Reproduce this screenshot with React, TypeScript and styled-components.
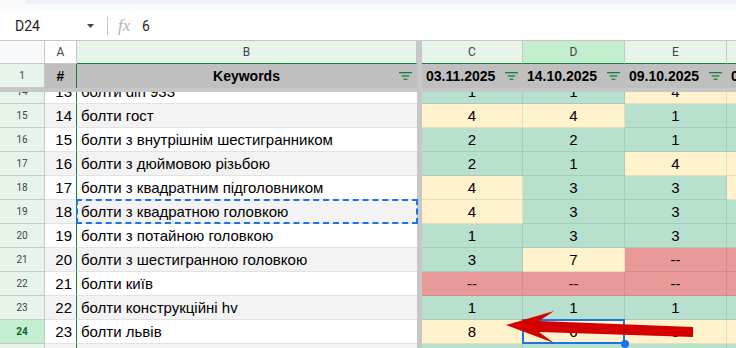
import React from 'react';
import styled, { createGlobalStyle, css } from 'styled-components';

const GlobalStyle = createGlobalStyle`
  html, body {
    margin: 0;
    padding: 0;
    background: #fff;
  }
  body {
    font-family: 'Liberation Sans', Arial, sans-serif;
  }
  * {
    box-sizing: border-box;
  }
`;

const COLS = '45px 32px 340px 5px 101px 102px 102px 102px';

type Tone = 'g' | 'y' | 'r';

const FILL: Record<Tone, string> = {
  g: '#b7e1cd',
  y: '#fff2cc',
  r: '#ea9999',
};

interface Row {
  n: number;
  a: string;
  b: string;
  cells: [string, Tone][];
}

const rows: Row[] = [
  { n: 14, a: '13', b: 'болти din 933', cells: [['1', 'g'], ['1', 'g'], ['4', 'y'], ['', 'y']] },
  { n: 15, a: '14', b: 'болти гост', cells: [['4', 'y'], ['4', 'y'], ['1', 'g'], ['', 'g']] },
  { n: 16, a: '15', b: 'болти з внутрішнім шестигранником', cells: [['2', 'g'], ['2', 'g'], ['1', 'g'], ['', 'g']] },
  { n: 17, a: '16', b: 'болти з дюймовою різьбою', cells: [['2', 'g'], ['1', 'g'], ['4', 'y'], ['', 'y']] },
  { n: 18, a: '17', b: 'болти з квадратним підголовником', cells: [['4', 'y'], ['3', 'g'], ['3', 'g'], ['', 'y']] },
  { n: 19, a: '18', b: 'болти з квадратною головкою', cells: [['4', 'y'], ['3', 'g'], ['3', 'g'], ['', 'g']] },
  { n: 20, a: '19', b: 'болти з потайною головкою', cells: [['1', 'g'], ['3', 'g'], ['3', 'g'], ['', 'g']] },
  { n: 21, a: '20', b: 'болти з шестигранною головкою', cells: [['3', 'g'], ['7', 'y'], ['--', 'r'], ['', 'r']] },
  { n: 22, a: '21', b: 'болти київ', cells: [['--', 'r'], ['--', 'r'], ['--', 'r'], ['', 'r']] },
  { n: 23, a: '22', b: 'болти конструкційні hv', cells: [['1', 'g'], ['1', 'g'], ['1', 'g'], ['', 'g']] },
  { n: 24, a: '23', b: 'болти львів', cells: [['8', 'y'], ['6', 'y'], ['5', 'y'], ['', 'y']] },
  { n: 25, a: '24', b: '', cells: [['', 'g'], ['', 'g'], ['', 'g'], ['', 'g']] },
];

const Page = styled.div`
  position: relative;
  width: 736px;
  height: 348px;
  overflow: hidden;
  background: #fff;
  display: flex;
  flex-direction: column;
`;

const TopStrip = styled.div`
  height: 12px;
  flex-shrink: 0;
  background: #f9fbfd;
  padding-left: 25px;
`;

const StripTab = styled.div`
  height: 4px;
  background: #edf2fa;
  border-bottom-left-radius: 10px;
`;

const FormulaBar = styled.div`
  height: 28px;
  flex-shrink: 0;
  display: flex;
  align-items: center;
  font-family: Roboto, 'Liberation Sans', sans-serif;
  font-size: 14px;
  color: #1f1f1f;
`;

const NameBox = styled.div`
  width: 87px;
  padding-left: 15px;
`;

const Divider = styled.div`
  width: 1px;
  height: 18px;
  background: #c7c7c7;
  margin: 0 10px 0 13px;
`;

const Fx = styled.span`
  font-family: 'Liberation Serif', serif;
  font-style: italic;
  font-size: 17px;
  color: #b4b4b4;
  width: 24px;
`;

const GridRow = styled.div<{ $h?: number }>`
  display: grid;
  grid-template-columns: ${COLS};
  height: ${(p) => p.$h ?? 24}px;
  flex-shrink: 0;
`;

type LetterTone = 'corner' | 'plain' | 'light' | 'active';

const letterBg: Record<LetterTone, string> = {
  corner: '#f8f9fa',
  plain: '#ffffff',
  light: '#e6f4ea',
  active: '#c4eed0',
};

const ColLetter = styled.div<{ $tone: LetterTone; $green?: boolean }>`
  display: flex;
  align-items: center;
  justify-content: center;
  font-family: Roboto, 'Liberation Sans', sans-serif;
  font-size: 12px;
  color: #444;
  background: ${(p) => letterBg[p.$tone]};
  border-top: 1px solid #c7c7c7;
  border-right: 1px solid #c7c7c7;
  border-bottom: 1px solid ${(p) => (p.$green ? '#188038' : '#c7c7c7')};
`;

const FreezeCol = styled.div`
  background: #c7c7c7;
`;

const FreezeRow = styled.div`
  height: 4px;
  flex-shrink: 0;
  background: #c7c7c7;
`;

const RowNum = styled.div<{ $active?: boolean }>`
  display: flex;
  align-items: center;
  justify-content: center;
  font-family: Roboto, 'Liberation Sans', sans-serif;
  font-size: 10px;
  color: ${(p) => (p.$active ? '#0d652d' : '#444')};
  font-weight: ${(p) => (p.$active ? 700 : 400)};
  background: ${(p) => (p.$active ? '#c4eed0' : '#e6f4ea')};
  border-right: 1px solid #c7c7c7;
  border-bottom: 1px solid #c7c7c7;
`;

const HeadCell = styled.div<{ $center?: boolean; $green?: boolean }>`
  display: flex;
  align-items: center;
  justify-content: ${(p) => (p.$center ? 'center' : 'space-between')};
  padding: 0 4px;
  background: #bfbfbf;
  font-size: 14px;
  font-weight: 700;
  color: #000;
  white-space: nowrap;
  overflow: hidden;
  border-right: 1px solid ${(p) => (p.$green ? '#188038' : '#bfbfbf')};
`;

const KeywordHead = styled(HeadCell)`
  position: relative;
  justify-content: center;
`;

const FilterSlot = styled.span`
  position: absolute;
  right: 4px;
  top: 8px;
  display: flex;
`;

const Body = styled.div`
  flex: 1;
  overflow: hidden;
`;

const BodyInner = styled.div`
  margin-top: -12px;
  display: flex;
  flex-direction: column;
`;

const bandCss = css<{ $band?: boolean }>`
  background: ${(p) => (p.$band ? '#f3f3f3' : '#ffffff')};
  border-bottom: 1px solid #e2e2e2;
`;

const NumCell = styled.div<{ $band?: boolean }>`
  ${bandCss};
  display: flex;
  align-items: center;
  justify-content: flex-end;
  padding-right: 4px;
  font-size: 15px;
  color: #000;
  border-right: 1px solid #188038;
`;

const TextCell = styled.div<{ $band?: boolean; $dashed?: boolean }>`
  ${bandCss};
  position: relative;
  display: flex;
  align-items: center;
  padding-left: 4px;
  font-size: 15px;
  color: #000;
  white-space: nowrap;

  ${(p) =>
    p.$dashed &&
    css`
      &::after {
        content: '';
        position: absolute;
        left: -1px;
        top: -1px;
        right: -1px;
        bottom: -1px;
        border: 2px dashed #1a73e8;
        z-index: 2;
      }
    `}
`;

const DataCell = styled.div<{ $tone: Tone; $selected?: boolean }>`
  position: relative;
  display: flex;
  align-items: center;
  justify-content: center;
  font-size: 15px;
  color: #000;
  background: ${(p) => FILL[p.$tone]};
  border-right: 1px solid rgba(0, 0, 0, 0.09);
  border-bottom: 1px solid rgba(0, 0, 0, 0.09);

  ${(p) =>
    p.$selected &&
    css`
      z-index: 3;
      &::after {
        content: '';
        position: absolute;
        left: -1px;
        top: -1px;
        right: -1px;
        bottom: -1px;
        border: 2px solid #1a73e8;
      }
      &::before {
        content: '';
        position: absolute;
        right: -5px;
        bottom: -5px;
        width: 8px;
        height: 8px;
        border-radius: 50%;
        background: #1a73e8;
        z-index: 1;
      }
    `}
`;

const ArrowLayer = styled.svg`
  position: absolute;
  left: 0;
  top: 0;
  pointer-events: none;
  z-index: 5;
`;

const Caret = () => (
  <svg width="7" height="4" viewBox="0 0 7 4">
    <path d="M0 0h7L3.5 4z" fill="#444" />
  </svg>
);

const FilterIcon = () => (
  <svg width="13" height="8" viewBox="0 0 13 8">
    <rect x="0" y="0" width="13" height="1.3" fill="#188038" />
    <rect x="2.7" y="3.3" width="7.6" height="1.3" fill="#188038" />
    <rect x="4.6" y="6.6" width="3.8" height="1.3" fill="#188038" />
  </svg>
);

const dates = ['03.11.2025', '14.10.2025', '09.10.2025'];

export default function App() {
  return (
    <>
      <GlobalStyle />
      <Page>
        <TopStrip>
          <StripTab />
        </TopStrip>
        <FormulaBar>
          <NameBox>D24</NameBox>
          <Caret />
          <Divider />
          <Fx>fx</Fx>
          <span>6</span>
        </FormulaBar>

        <GridRow>
          <ColLetter $tone="corner" />
          <ColLetter $tone="plain">A</ColLetter>
          <ColLetter $tone="light" $green>B</ColLetter>
          <FreezeCol />
          <ColLetter $tone="light" $green>C</ColLetter>
          <ColLetter $tone="active" $green>D</ColLetter>
          <ColLetter $tone="light" $green>E</ColLetter>
          <ColLetter $tone="light" $green>F</ColLetter>
        </GridRow>

        <GridRow>
          <RowNum>1</RowNum>
          <HeadCell $center $green>#</HeadCell>
          <KeywordHead>
            Keywords
            <FilterSlot>
              <FilterIcon />
            </FilterSlot>
          </KeywordHead>
          <FreezeCol />
          {dates.map((d) => (
            <HeadCell key={d}>
              {d}
              <FilterIcon />
            </HeadCell>
          ))}
          <HeadCell>07.10.2025</HeadCell>
        </GridRow>

        <FreezeRow />

        <Body>
          <BodyInner>
            {rows.map((r) => (
              <GridRow key={r.n}>
                <RowNum $active={r.n === 24}>{r.n}</RowNum>
                <NumCell $band={r.n % 2 === 1}>{r.a}</NumCell>
                <TextCell $band={r.n % 2 === 1} $dashed={r.n === 19}>
                  {r.b}
                </TextCell>
                <FreezeCol />
                {r.cells.map(([v, t], i) => (
                  <DataCell key={i} $tone={t} $selected={r.n === 24 && i === 1}>
                    {v}
                  </DataCell>
                ))}
              </GridRow>
            ))}
          </BodyInner>
        </Body>

        <ArrowLayer width="736" height="348" viewBox="0 0 736 348">
          <polygon
            points="506,325 554,311 539,321 693,327 693,337 539,332 554,343"
            fill="#d40000"
          />
        </ArrowLayer>
      </Page>
    </>
  );
}
